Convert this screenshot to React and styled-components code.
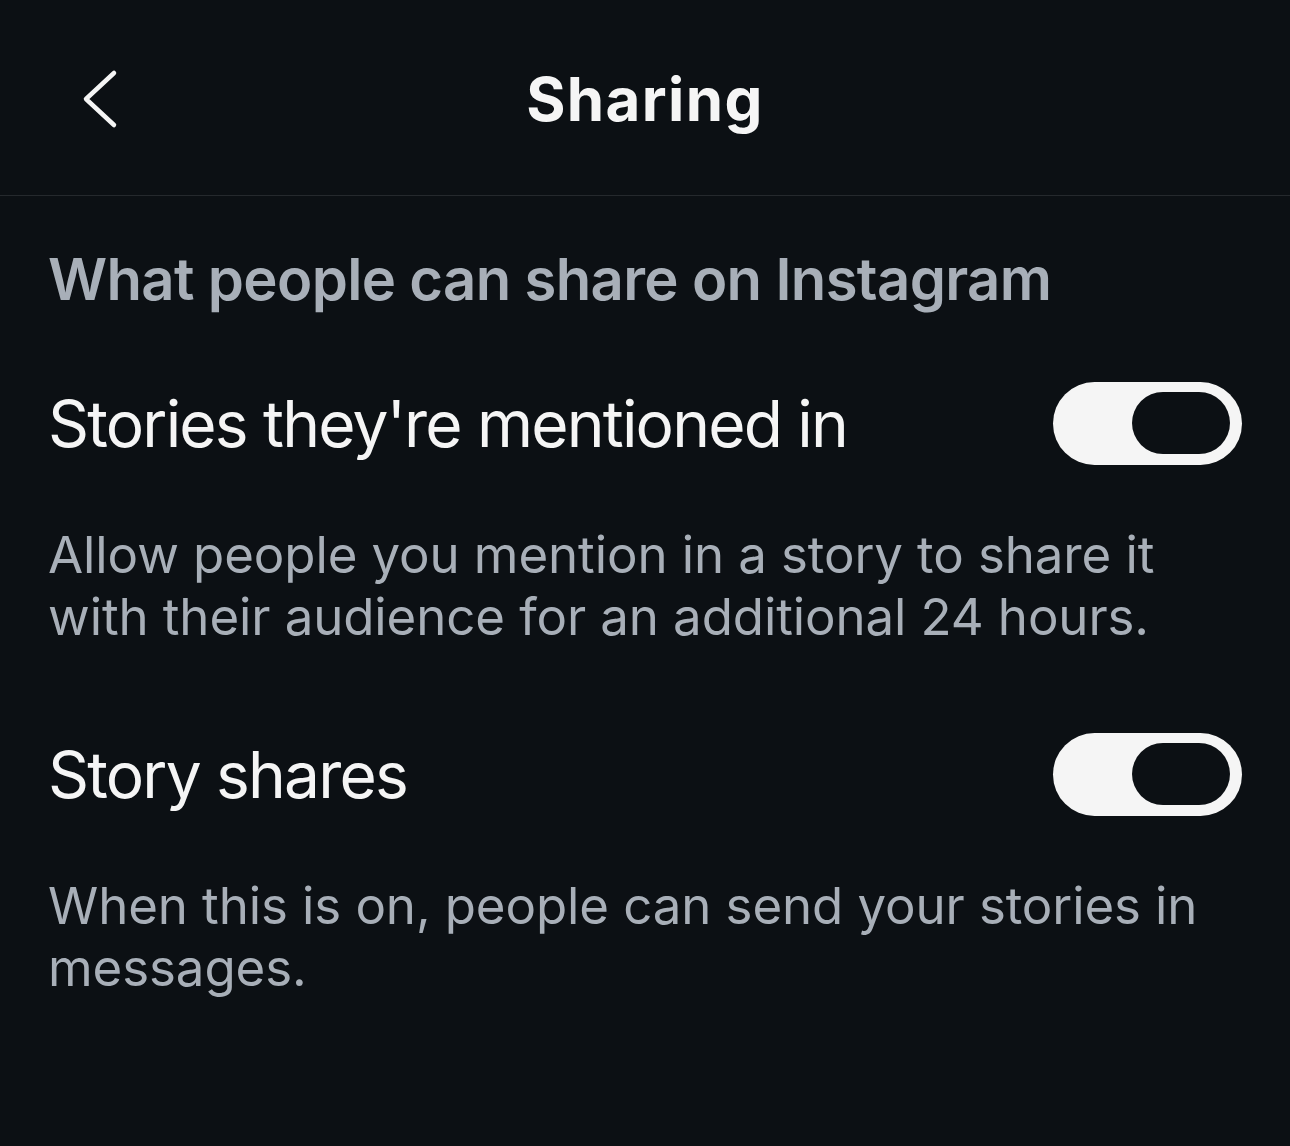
import React, { useState } from 'react';
import styled, { createGlobalStyle } from 'styled-components';

const GlobalStyle = createGlobalStyle`
  html, body {
    margin: 0;
    padding: 0;
    background: #0c1014;
  }
  body {
    font-family: Inter, "Noto Sans", "Liberation Sans", sans-serif;
    -webkit-font-smoothing: antialiased;
  }
`;

const Page = styled.div`
  width: 1290px;
  min-height: 1146px;
  background: #0c1014;
  color: #f5f5f5;
`;

const Header = styled.header`
  position: relative;
  height: 195px;
  display: flex;
  align-items: center;
  justify-content: center;
  border-bottom: 1px solid #25292d;
`;

const BackButton = styled.button`
  position: absolute;
  left: 74px;
  top: 60px;
  width: 52px;
  height: 78px;
  padding: 0;
  border: 0;
  background: none;
  color: #f5f5f5;
  cursor: pointer;
  display: flex;
  align-items: center;
  justify-content: center;
`;

const Title = styled.h1`
  margin: 0;
  margin-top: 2px;
  font-size: 60px;
  font-weight: 700;
  letter-spacing: 1.4px;
  color: #f5f5f5;
`;

const Content = styled.main`
  padding: 48px 48px 0 48px;
`;

const SectionHeading = styled.h2`
  margin: 0;
  font-size: 58px;
  line-height: 70px;
  font-weight: 600;
  letter-spacing: -0.65px;
  color: #a8afb8;
`;

const Setting = styled.section`
  margin-top: ${p => p.$gap}px;
`;

const Row = styled.div`
  display: flex;
  align-items: center;
  justify-content: space-between;
  height: 83px;
`;

const Label = styled.span`
  font-size: 64px;
  line-height: 83px;
  font-weight: 400;
  letter-spacing: -1.8px;
  color: #f5f5f5;
`;

const Description = styled.p`
  margin: 59px 0 0;
  max-width: 1170px;
  font-size: 51px;
  line-height: 62px;
  font-weight: 400;
  letter-spacing: -0.1px;
  color: #a8afb8;
`;

const Track = styled.button`
  position: relative;
  flex: none;
  width: 189px;
  height: 83px;
  padding: 0;
  border: 0;
  border-radius: 42px;
  background: ${p => (p.$on ? '#f5f5f5' : '#363a3f')};
  cursor: pointer;
`;

const Knob = styled.span`
  position: absolute;
  top: 10px;
  ${p => (p.$on ? 'right: 12px;' : 'left: 12px;')}
  width: 98px;
  height: 62px;
  border-radius: 31px;
  background: #0c1014;
`;

const Chevron = () => (
  <svg width="40" height="64" viewBox="0 0 40 64" fill="none">
    <path
      d="M34 6 L6 32 L34 58"
      stroke="currentColor"
      strokeWidth="4.5"
      strokeLinecap="round"
      strokeLinejoin="round"
    />
  </svg>
);

const Toggle = ({ on, onChange }) => (
  <Track $on={on} onClick={() => onChange(!on)} aria-pressed={on}>
    <Knob $on={on} />
  </Track>
);

const settings = [
  {
    id: 'mentions',
    label: "Stories they're mentioned in",
    text: 'Allow people you mention in a story to share it with their audience for an additional 24 hours.',
    gap: 68,
  },
  {
    id: 'shares',
    label: 'Story shares',
    text: 'When this is on, people can send your stories in messages.',
    gap: 85,
  },
];

export default function App() {
  const [values, setValues] = useState({ mentions: true, shares: true });

  return (
    <Page>
      <GlobalStyle />
      <Header>
        <BackButton aria-label="Back">
          <Chevron />
        </BackButton>
        <Title>Sharing</Title>
      </Header>
      <Content>
        <SectionHeading>What people can share on Instagram</SectionHeading>
        {settings.map(s => (
          <Setting key={s.id} $gap={s.gap}>
            <Row>
              <Label>{s.label}</Label>
              <Toggle
                on={values[s.id]}
                onChange={v => setValues(prev => ({ ...prev, [s.id]: v }))}
              />
            </Row>
            <Description>{s.text}</Description>
          </Setting>
        ))}
      </Content>
    </Page>
  );
}
